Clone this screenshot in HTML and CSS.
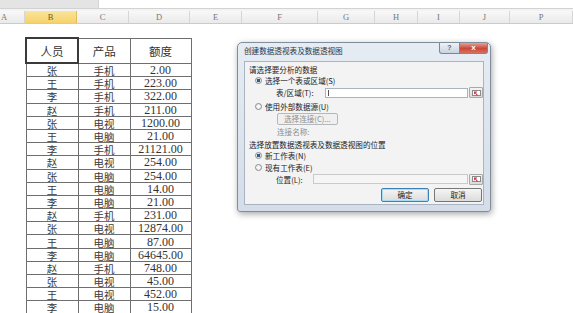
FILE: index.html
```html
<!DOCTYPE html>
<html lang="zh">
<head>
  <meta charset="UTF-8">
  <title>创建数据透视表</title>
  <link rel="stylesheet" href="styles.css">
</head>
<body>
  <div class="topbar"><div class="namebox"></div><div class="formula"></div></div>
  <div class="gap"></div>
  <div class="colheads">
    <div class="col-a">A</div>
    <div class="sel">B</div>
    <div>C</div>
    <div>D</div>
    <div>E</div>
    <div>F</div>
    <div>G</div>
    <div>H</div>
    <div>I</div>
    <div>J</div>
    <div>P</div>
  </div>

  <div class="sheet">
    <table class="data">
      <colgroup><col class="w52"><col class="w52"><col class="w61"></colgroup>
      <tr class="head"><td class="active">人员</td><td>产品</td><td>额度</td></tr>
      <tr><td>张</td><td>手机</td><td>2.00</td></tr>
      <tr><td>王</td><td>手机</td><td>223.00</td></tr>
      <tr><td>李</td><td>手机</td><td>322.00</td></tr>
      <tr><td>赵</td><td>手机</td><td>211.00</td></tr>
      <tr><td>张</td><td>电视</td><td>1200.00</td></tr>
      <tr><td>王</td><td>电脑</td><td>21.00</td></tr>
      <tr><td>李</td><td>手机</td><td>21121.00</td></tr>
      <tr><td>赵</td><td>电视</td><td>254.00</td></tr>
      <tr><td>张</td><td>电脑</td><td>254.00</td></tr>
      <tr><td>王</td><td>电脑</td><td>14.00</td></tr>
      <tr><td>李</td><td>电脑</td><td>21.00</td></tr>
      <tr><td>赵</td><td>手机</td><td>231.00</td></tr>
      <tr><td>张</td><td>电视</td><td>12874.00</td></tr>
      <tr><td>王</td><td>电脑</td><td>87.00</td></tr>
      <tr><td>李</td><td>电脑</td><td>64645.00</td></tr>
      <tr><td>赵</td><td>手机</td><td>748.00</td></tr>
      <tr><td>张</td><td>电视</td><td>45.00</td></tr>
      <tr><td>王</td><td>电视</td><td>452.00</td></tr>
      <tr><td>李</td><td>电脑</td><td>15.00</td></tr>
    </table>
  </div>

  <div class="dialog">
    <div class="titlebar">
      <span class="title">创建数据透视表及数据透视图</span>
      <span class="help">?</span>
      <span class="close">x</span>
    </div>
    <div class="content">
      <div class="row heading">请选择要分析的数据</div>
      <div class="row opt"><span class="radio on"></span>选择一个表或区域(S)</div>
      <div class="row field">
        <span class="lbl">表/区域(T):</span>
        <span class="input"><span class="caret"></span></span>
        <span class="pick"><svg width="9" height="6" viewBox="0 0 9 6"><rect x="0.5" y="0.5" width="8" height="5" fill="#fff" stroke="#8a8a8a"/><path d="M2 1.5h3v1H3.5L6 5 5 5.5 2.8 3v1.3H2z" fill="#c0304a"/></svg></span>
      </div>
      <div class="row opt opt2"><span class="radio"></span>使用外部数据源(U)</div>
      <div class="row sub"><span class="btn off">选择连接(C)...</span></div>
      <div class="row sub grey">连接名称:</div>
      <div class="row heading">选择放置数据透视表及数据透视图的位置</div>
      <div class="row opt"><span class="radio on"></span>新工作表(N)</div>
      <div class="row opt"><span class="radio"></span>现有工作表(E)</div>
      <div class="row field">
        <span class="lbl short">位置(L):</span>
        <span class="input off"></span>
        <span class="pick"><svg width="9" height="6" viewBox="0 0 9 6"><rect x="0.5" y="0.5" width="8" height="5" fill="#fff" stroke="#8a8a8a"/><path d="M2 1.5h3v1H3.5L6 5 5 5.5 2.8 3v1.3H2z" fill="#c0304a"/></svg></span>
      </div>
      <div class="row actions">
        <span class="btn ok">确定</span>
        <span class="btn">取消</span>
      </div>
    </div>
  </div>
</body>
</html>
```

FILE: styles.css
```css
body {
  margin: 0;
  width: 573px;
  height: 313px;
  overflow: hidden;
  position: relative;
  background: #fff;
  font-family: "Liberation Serif", "Noto Sans CJK SC", serif;
}

.topbar { display: flex; height: 8px; border-bottom: 1px solid #d2d2d2; }
.namebox { width: 98px; background: #e4e4e4; border-right: 1px solid #d6d6d6; }
.formula { flex: 1; background: #fff; }
.gap { height: 2px; background: #f3f3f3; }

.colheads {
  display: grid;
  grid-template-columns: 25px 52px 52px 61px 52px 76px 57px 43px 42px 50px 63px;
  height: 12px;
  background: linear-gradient(#f8f8f8, #eaeaea);
  border-bottom: 1px solid #cbcbcb;
}
.colheads div {
  border-right: 1px solid #d6d6d6;
  text-align: center;
  font-size: 8.5px;
  line-height: 12px;
  color: #777;
}
.colheads .col-a { text-align: left; padding-left: 1px; }
.colheads .sel { background: linear-gradient(#fbe59a, #f5d36a); color: #6a5a30; border-right-color: #e2bd5a; }

.sheet { padding: 13px 0 0 25px; }

.data {
  border-collapse: collapse;
  table-layout: fixed;
  color: #333;
}
.w52 { width: 52px; }
.w61 { width: 61px; }
.data td {
  border: 1px solid #6e6e6e;
  padding: 0;
  height: 12.2px;
  line-height: 12px;
  font-size: 12px;
  text-align: center;
  overflow: hidden;
}
.data td:nth-child(-n+2) {
  font-family: "Noto Sans CJK SC", sans-serif;
  font-size: 10.5px;
  line-height: 11px;
  padding-top: 1px;
  height: 11.2px;
  color: #3a3a3a;
}
.data .head td { height: 23px; font-size: 11.5px; line-height: 12px; padding-top: 0; color: #333; }
.data td.active { border: 2px solid #3a3a3a; }
.data .head td:last-child { font-family: "Noto Sans CJK SC", sans-serif; }

.dialog {
  position: absolute;
  left: 237px;
  top: 42px;
  width: 254px;
  height: 170px;
  box-sizing: border-box;
  padding: 0 6px 6px;
  display: flex;
  flex-direction: column;
  background: linear-gradient(#e6ecf3, #d4dde8);
  border: 1px solid #7f8d9d;
  border-radius: 5px 5px 3px 3px;
  box-shadow: 1px 2px 6px rgba(0, 0, 0, 0.35);
  font-family: "Noto Sans CJK SC", sans-serif;
  font-size: 7.6px;
  color: #222;
}

.titlebar { display: flex; align-items: flex-start; height: 18px; margin-right: -4px; }
.title { flex: 1; padding-top: 3px; line-height: 10px; color: #2a3548; }
.help, .close {
  height: 10px;
  line-height: 10px;
  text-align: center;
  border: 1px solid #7a8796;
  border-top: 0;
  font-family: "Liberation Sans", sans-serif;
  font-weight: bold;
}
.help { width: 19px; background: linear-gradient(#eef2f7, #c8d3e0); color: #5a6470; font-size: 7px; border-radius: 0 0 0 3px; }
.close { width: 27px; background: linear-gradient(#e6a092, #c9473b 55%, #d8705e); color: #fff; font-size: 8px; border-left: 0; border-radius: 0 0 3px 0; }

.content {
  flex: 1;
  background: #f3f3f3;
  border: 1px solid #a8b4c2;
  display: flex;
  flex-direction: column;
  padding-top: 1px;
}

.row { display: flex; align-items: center; white-space: nowrap; }
.heading { height: 12px; padding-left: 4px; }
.opt { height: 11.5px; padding-left: 10px; gap: 3px; }
.opt2 { margin-top: 2px; }
.field { height: 12px; padding-left: 31px; }
.lbl { width: 50px; }
.lbl.short { width: 37px; }
.sub { height: 13px; padding-left: 32px; }
.grey { color: #8e8e8e; }

.radio {
  width: 5px;
  height: 5px;
  border: 1px solid #8c8c8c;
  border-radius: 50%;
  background: radial-gradient(#fff, #e4e4e4);
}
.radio.on { background: radial-gradient(#2a5d8a 40%, #dfe6ee 45%); }

.input {
  width: 144px;
  height: 8px;
  background: #fff;
  border: 1px solid #aeb3b9;
  display: flex;
  align-items: center;
}
.input.off { width: 155px; background: #f5f5f5; border-color: #cacaca; }
.caret { width: 1px; height: 6px; margin-left: 2px; background: #555; }

.pick {
  width: 12px;
  height: 9px;
  margin-left: 1px;
  border: 1px solid #a9a9a9;
  border-radius: 1px;
  background: linear-gradient(#f4f4f4, #dadada);
  display: flex;
  align-items: center;
  justify-content: center;
}

.btn {
  height: 10px;
  line-height: 10px;
  padding: 0 6px;
  border: 1px solid #777;
  border-radius: 2px;
  background: linear-gradient(#f5f5f5, #dcdcdc);
  text-align: center;
}
.btn.off { border-color: #b4b8bc; color: #8e8e8e; background: #f0f0f0; }
.actions { justify-content: flex-end; gap: 5px; padding-right: 1px; margin-top: 2px; height: 16px; }
.actions .btn { width: 34px; height: 12px; line-height: 12px; }
.btn.ok { border-color: #3e80b4; box-shadow: inset 0 0 0 1px #a9dcf4; }
```
